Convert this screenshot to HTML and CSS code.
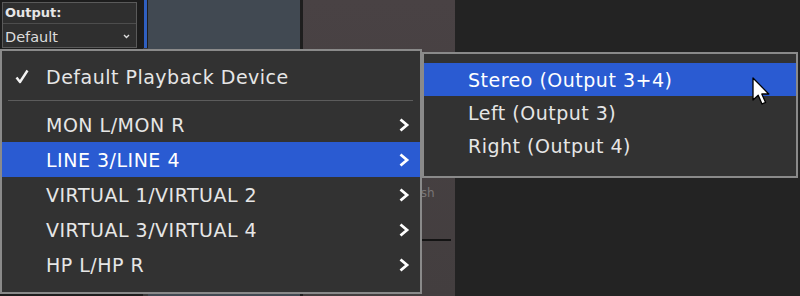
FILE: index.html
```html
<!DOCTYPE html>
<html lang="en">
  <head>
    <meta charset="UTF-8" />
    <meta name="viewport" content="width=device-width, initial-scale=1.0" />
    <title>Output Routing</title>
    <link rel="stylesheet" href="styles.css">
  </head>
  <body>
    <div class="app">
      <div class="col col-output">
        <div class="output-box">
          <p class="output-label">Output:</p>
          <div class="output-select">
            <span>Default</span>
            <svg class="select-arrow" width="7" height="5" viewBox="0 0 7 5">
              <polyline points="1,1 3.5,3.5 6,1" fill="none" stroke="#ddd" stroke-width="1.4" />
            </svg>
          </div>
        </div>
      </div>
      <div class="col col-line"><div class="blue-line"></div></div>
      <div class="col col-blue"></div>
      <div class="col col-gap"></div>
      <div class="col col-mauve">
        <span class="mauve-label">Flush</span>
        <div class="mauve-track"></div>
      </div>
      <div class="col col-rest"></div>
    </div>

    <div class="menu main-menu">
      <div class="menu-item">
        <span class="check">
          <svg width="14" height="15" viewBox="0 0 14 15">
            <path d="M1.5 8.5 L5 13 L12.5 1.5" fill="none" stroke="#f2f2f2" stroke-width="2.4" stroke-linejoin="round" />
          </svg>
        </span>
        <span class="label">Default Playback Device</span>
        <span></span>
      </div>
      <div class="separator"></div>
      <div class="menu-item">
        <span></span>
        <span class="label">MON L/MON R</span>
        <span class="chevron"><svg width="12" height="16" viewBox="0 0 12 16"><polyline points="2.5,2.5 9,8 2.5,13.5" fill="none" stroke="#fff" stroke-width="2.8" /></svg></span>
      </div>
      <div class="menu-item active">
        <span></span>
        <span class="label">LINE 3/LINE 4</span>
        <span class="chevron"><svg width="12" height="16" viewBox="0 0 12 16"><polyline points="2.5,2.5 9,8 2.5,13.5" fill="none" stroke="#fff" stroke-width="2.8" /></svg></span>
      </div>
      <div class="menu-item">
        <span></span>
        <span class="label">VIRTUAL 1/VIRTUAL 2</span>
        <span class="chevron"><svg width="12" height="16" viewBox="0 0 12 16"><polyline points="2.5,2.5 9,8 2.5,13.5" fill="none" stroke="#fff" stroke-width="2.8" /></svg></span>
      </div>
      <div class="menu-item">
        <span></span>
        <span class="label">VIRTUAL 3/VIRTUAL 4</span>
        <span class="chevron"><svg width="12" height="16" viewBox="0 0 12 16"><polyline points="2.5,2.5 9,8 2.5,13.5" fill="none" stroke="#fff" stroke-width="2.8" /></svg></span>
      </div>
      <div class="menu-item">
        <span></span>
        <span class="label">HP L/HP R</span>
        <span class="chevron"><svg width="12" height="16" viewBox="0 0 12 16"><polyline points="2.5,2.5 9,8 2.5,13.5" fill="none" stroke="#fff" stroke-width="2.8" /></svg></span>
      </div>
    </div>

    <div class="menu sub-menu">
      <div class="sub-item active">Stereo (Output 3+4)</div>
      <div class="sub-item">Left (Output 3)</div>
      <div class="sub-item">Right (Output 4)</div>
    </div>

    <svg class="cursor" width="20" height="30" viewBox="0 0 20 30">
      <path d="M1 1 L1 23 L6.2 18.2 L10 27 L13.6 25.4 L9.8 17 L16.8 17 Z" fill="#fff" stroke="#000" stroke-width="1.3" stroke-linejoin="round" />
    </svg>
  </body>
</html>
```

FILE: styles.css
```css
html {
  box-sizing: border-box;
  font-size: 16px;
}

*,
*:before,
*:after {
  box-sizing: inherit;
}

body,
p {
  margin: 0;
  padding: 0;
}

body {
  font-family: "DejaVu Sans", Verdana, sans-serif;
  background-color: #232323;
  color: #e8e8e8;
  width: 800px;
  height: 296px;
  overflow: hidden;
  position: relative;
}

/* background panels behind the menus */
.app {
  display: grid;
  grid-template-columns: 143px 5px 152px 3px 152px 1fr;
  height: 296px;
}

.col-output {
  background-color: #1d1d1d;
  padding: 2px 6px 0 2px;
}

.output-box {
  height: 46px;
  border: 1px solid #5a5a5a;
  background-color: #2f2f2f;
  display: flex;
  flex-direction: column;

  .output-label {
    font-size: 13px;
    font-weight: bold;
    color: #e6e6e6;
    height: 21px;
    padding: 2px 0 0 2px;
    border-bottom: 1px solid #4d4d4d;
  }

  .output-select {
    display: flex;
    align-items: center;
    justify-content: space-between;
    font-size: 14.5px;
    color: #dcdcdc;
    padding: 2px 6px 0 2px;
    flex: 1;
  }
}

.col-line {
  background-color: #3a3a3a;

  .blue-line {
    height: 48px;
    background: linear-gradient(to right, #1d1d1d 0 1px, #2f5fbf 1px 4px, #1d1d1d 4px);
  }
}

.col-blue {
  background-color: #414952;
}

.col-gap {
  background-color: #1e1e1e;
}

.col-mauve {
  background: linear-gradient(#494244, #433e3f);
  display: flex;
  flex-direction: column;
  padding-top: 186px;

  .mauve-label {
    font-size: 12px;
    color: #7a7576;
    padding-left: 100px;
  }

  .mauve-track {
    height: 2px;
    background-color: #141414;
    margin: 39px 4px 0 20px;
  }
}

.col-rest {
  background-color: #232323;
}

/* popup menus */
.menu {
  position: absolute;
  background-color: #323232;
  border: 2px solid #8a8a8a;
  font-size: 19px;
  letter-spacing: 0.5px;
  color: #e6e6e6;
}

.main-menu {
  left: 0;
  top: 49px;
  width: 422px;
  height: 245px;
  padding-top: 8px;
}

.menu-item {
  display: grid;
  grid-template-columns: 44px 1fr 22px;
  align-items: center;
  height: 35px;

  .check {
    display: flex;
    padding-left: 13px;
  }

  .chevron {
    display: flex;
  }
}

.separator {
  height: 1px;
  background-color: #5c5c5c;
  margin: 6px 7px 6px 6px;
}

.active {
  background-color: #2a5bd2;
  color: #fff;
}

.sub-menu {
  left: 422px;
  top: 52px;
  width: 376px;
  height: 126px;
  padding-top: 9px;
}

.sub-item {
  height: 33px;
  display: flex;
  align-items: center;
  padding-left: 44px;
}

.cursor {
  position: absolute;
  left: 752px;
  top: 77px;
}
```
